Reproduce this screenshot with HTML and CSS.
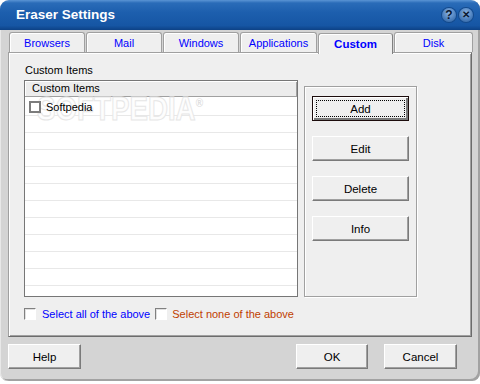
FILE: index.html
```html
<!DOCTYPE html>
<html lang="en">
<head>
  <meta charset="utf-8">
  <title>Eraser Settings</title>
  <link rel="stylesheet" href="styles.css">
</head>
<body>
  <div class="window">
    <div class="titlebar">
      <span class="title">Eraser Settings</span>
      <div class="title-btns">
        <span class="tbtn">?</span>
        <span class="tbtn tbtn-close">&#x2715;</span>
      </div>
    </div>

    <div class="tabs">
      <div class="tab">Browsers</div>
      <div class="tab">Mail</div>
      <div class="tab">Windows</div>
      <div class="tab tab-apps">Applications</div>
      <div class="tab active">Custom</div>
      <div class="tab tab-disk">Disk</div>
    </div>

    <div class="panel">
      <div class="caption">Custom Items</div>
      <div class="panel-main">
        <div class="listbox">
          <div class="list-head">Custom Items</div>
          <div class="list-body">
            <div class="watermark">SOFTPEDIA<span class="reg">&reg;</span></div>
            <div class="list-row"><span class="check"></span>Softpedia</div>
          </div>
        </div>
        <div class="groupbox">
          <button class="btn default">Add</button>
          <button class="btn">Edit</button>
          <button class="btn">Delete</button>
          <button class="btn">Info</button>
        </div>
      </div>
      <div class="select-row">
        <span class="box"></span><span class="sel-all">Select all of the above</span>
        <span class="box"></span><span class="sel-none">Select none of the above</span>
      </div>
    </div>

    <div class="footer">
      <button class="btn btn-help">Help</button>
      <button class="btn btn-ok">OK</button>
      <button class="btn btn-cancel">Cancel</button>
    </div>
  </div>
</body>
</html>
```

FILE: styles.css
```css
:root {
  --face: #efefef;
  --frame: #d4d4d4;
  --shade: #808080;
  --light-shade: #a0a0a0;
  --ui-font: "Liberation Sans", Arial, sans-serif;
}
* { box-sizing: border-box; }
body {
  margin: 0;
  background: #fff;
  font-family: var(--ui-font);
  font-size: 11px;
  color: #000;
}
.window {
  width: 480px;
  height: 381px;
  background: var(--frame);
  border-radius: 9px 9px 8px 8px;
  overflow: hidden;
  box-shadow: inset 1px 0 #e8e8e8, inset -2px -2px #a2a2a2;
}

/* title bar */
.titlebar {
  height: 30px;
  display: flex;
  align-items: center;
  justify-content: space-between;
  padding: 0 7px 0 16px;
  background: linear-gradient(#5a94d4 0, #2a6cb8 3px, #1d5fae 40%, #1656a4 85%, #0d4286 100%);
}
.title {
  color: #fff;
  font-weight: bold;
  font-size: 13.5px;
  margin-top: -1px;
}
.title-btns {
  display: flex;
  gap: 3px;
}
.tbtn {
  width: 14px;
  height: 14px;
  border-radius: 50%;
  background: radial-gradient(circle at 50% 35%, #8fb4e0 0, #4e82c0 55%, #2c5c98 100%);
  box-shadow: 0 0 0 1px #144a8c;
  color: #0a1830;
  font-weight: bold;
  font-size: 12px;
  line-height: 14px;
  text-align: center;
}
.tbtn-close { font-size: 10px; }

/* tabs */
.tabs {
  display: flex;
  align-items: flex-end;
  height: 20px;
  margin-top: 2px;
  padding-left: 9px;
}
.tab {
  width: 76px;
  height: 20px;
  margin-right: 1px;
  border: 1px solid var(--light-shade);
  border-bottom: none;
  border-radius: 3px 3px 0 0;
  background: var(--face);
  box-shadow: inset 1px 1px #fff;
  color: #0000ff;
  text-align: center;
  line-height: 20px;
}
.tab-apps { width: 77px; margin-right: 1px; }
.tab-disk { width: 79px; }
.tab.active {
  position: relative;
  z-index: 1;
  width: 75px;
  height: 21px;
  margin-bottom: -2px;
  font-weight: bold;
  font-size: 11.5px;
  line-height: 21px;
  border-color: var(--light-shade) var(--shade) var(--shade) var(--light-shade);
}

/* page panel */
.panel {
  width: 464px;
  height: 285px;
  margin-left: 8px;
  padding: 11px 0 0 15px;
  background: var(--face);
  border: 1px solid;
  border-color: var(--light-shade) #6c6c6c #6c6c6c var(--light-shade);
  box-shadow: inset 1px 1px #fff, inset -1px -1px var(--light-shade);
}
.caption {
  height: 13px;
  line-height: 13px;
  padding-left: 1px;
}
.panel-main {
  display: flex;
  align-items: flex-start;
  margin-top: 3px;
}
.listbox {
  position: relative;
  width: 274px;
  height: 217px;
  display: flex;
  flex-direction: column;
  background: #fff;
  border: 1px solid #767676;
  overflow: hidden;
}
.list-head {
  height: 16px;
  line-height: 15px;
  padding-left: 7px;
  background: #ececec;
  border-bottom: 1px solid var(--light-shade);
  box-shadow: inset 1px 1px #fff, inset -1px 0 var(--light-shade);
}
.list-body {
  position: relative;
  flex: 1;
  padding-top: 2px;
  background: repeating-linear-gradient(#fff 0 16px, #e8e8e8 16px 17px) content-box;
}
.list-row {
  position: relative;
  height: 16px;
  display: flex;
  align-items: center;
  padding-left: 4px;
}
.check {
  width: 12px;
  height: 12px;
  margin-right: 5px;
  border: 2px solid #7c7c7c;
  background: #fff;
}
.watermark {
  position: absolute;
  left: 12px;
  top: 0;
  font-size: 33px;
  line-height: 24px;
  font-weight: bold;
  color: #fdfdfd;
  -webkit-text-stroke: 1px #e6e6e6;
  transform: scaleX(0.84);
  transform-origin: left top;
}
.watermark .reg {
  font-size: 12px;
  line-height: 12px;
  vertical-align: top;
  -webkit-text-stroke: 0;
  color: #e0e0e0;
}
.groupbox {
  width: 113px;
  height: 211px;
  margin: 6px 0 0 6px;
  padding: 9px 0 0 7px;
  display: flex;
  flex-direction: column;
  gap: 15px;
  border: 1px solid var(--light-shade);
  box-shadow: 1px 1px #fff, inset 1px 1px #fff;
}

/* buttons */
.btn {
  width: 97px;
  height: 25px;
  padding: 0;
  font-family: var(--ui-font);
  font-size: 11.5px;
  color: #000;
  background: var(--face);
  border: 1px solid;
  border-color: #fff #7a7a7a #7a7a7a #fff;
  box-shadow: inset -1px -1px var(--light-shade);
}
.btn.default {
  border-color: #1c0c0c;
  box-shadow: inset 1px 1px #fff, inset -2px -2px #7a7a7a;
  outline: 1px dotted #000;
  outline-offset: -5px;
}

/* select all / none */
.select-row {
  display: flex;
  align-items: center;
  height: 13px;
  margin-top: 10px;
}
.box {
  width: 12px;
  height: 12px;
  background: #fff;
  border: 1px solid;
  border-color: #808080 #fff #fff #808080;
  box-shadow: inset 1px 1px #e0e0e0;
}
.sel-all { color: #0000ff; margin: 0 5px 0 6px; }
.sel-none { color: #c04000; margin-left: 5px; }

/* footer */
.footer {
  display: flex;
  margin-top: 7px;
  padding-left: 8px;
}
.btn-help { width: 73px; }
.btn-ok { width: 72px; margin-left: 215px; }
.btn-cancel { width: 73px; margin-left: 16px; }
```
